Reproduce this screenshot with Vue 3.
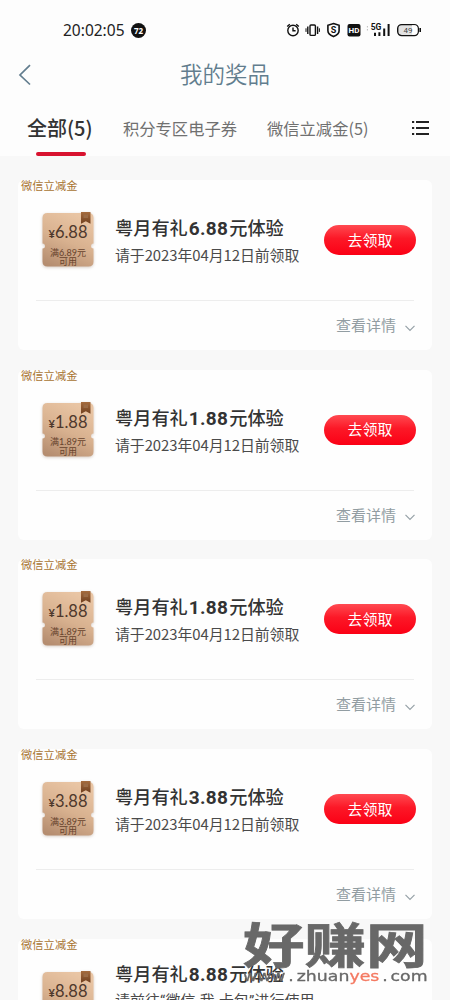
<script setup>
const prizes = [
  { amount: '6.88', min: '6.89', note: '请于2023年04月12日前领取', claimable: true },
  { amount: '1.88', min: '1.89', note: '请于2023年04月12日前领取', claimable: true },
  { amount: '1.88', min: '1.89', note: '请于2023年04月12日前领取', claimable: true },
  { amount: '3.88', min: '3.89', note: '请于2023年04月12日前领取', claimable: true },
  { amount: '8.88', min: '', note: '请前往“微信-我-卡包”进行使用', claimable: false },
]
</script>

<template>
  <div class="screen">
    <header class="top">
      <div class="status">
        <span class="clock">20:02:05</span>
        <span class="badge">72</span>
        <svg class="status-icons" width="140" height="20" viewBox="0 0 140 20" fill="none" stroke="#111" stroke-width="1.4">
          <circle cx="8" cy="10.5" r="5.2" />
          <path d="M8 7.5v3.3h2.6M2.2 6.5l2.6-2.3M13.8 6.5l-2.6-2.3" />
          <rect x="25" y="5" width="5.4" height="10.4" rx="1" />
          <path d="M22.8 6.5v7.4M32.6 6.5v7.4" />
          <path d="M21 8.3v3.6M34.4 8.3v3.6" stroke-width="1" />
          <path d="M48.5 3.5l5.6 1.8v5.4c0 3-2.6 4.7-5.6 5.9-3-1.2-5.6-2.9-5.6-5.9V5.3z" stroke-width="1.6" />
          <text class="glyph" x="48.5" y="13.4" font-size="9">S</text>
          <rect x="62.500" y="4" width="13" height="12.500" rx="2" fill="#111" stroke="none" />
          <text class="glyph light" x="69" y="13.2" font-size="8">HD</text>
          <text class="glyph" x="91" y="9.8" font-size="8.500">5G</text>
          <path d="M90 12.8v3.2M94.4 12.3v3.7M99.2 8.5V16M103.6 4v12" stroke-width="2" />
          <path d="M82.4 6v1.5M82.4 9v1.5" stroke="#bbb" stroke-width="1" />
          <rect x="112.7" y="4.6" width="20.6" height="11" rx="4" fill="#e2e2e2" />
          <path d="M127 5.3h2.5q3 0 3 3v3.4q0 3-3 3H127z" fill="#fff" stroke="none" />
          <path d="M135.2 8v4" stroke-width="1.6" />
          <text class="glyph level" x="123" y="13" font-size="8">49</text>
        </svg>
      </div>
      <div class="nav">
        <svg class="back" width="14" height="22" viewBox="0 0 14 22" fill="none" stroke="#627d8e" stroke-width="1.7"><path d="M12 1.2L2 11l10 9.5" /></svg>
        <h1>我的奖品</h1>
      </div>
      <nav class="tabs">
        <span class="tab active">全部(5)</span>
        <span class="tab second">积分专区电子券</span>
        <span class="tab third">微信立减金(5)</span>
        <svg class="list-icon" width="17" height="16" viewBox="0 0 17 16" fill="none" stroke="#222" stroke-width="2"><path d="M0 2h2.2M0 8h2.2M0 14h2.2M4 2h13M4 8h13M4 14h13" /></svg>
      </nav>
    </header>

    <main class="list">
      <article v-for="(p, i) in prizes" :key="i" class="card">
        <div class="tag">微信立减金</div>
        <div class="body">
          <div class="coupon">
            <svg class="ticket" width="58" height="60" viewBox="0 0 58 60">
              <defs>
                <linearGradient :id="'tan' + i" x1="0.6" y1="0" x2="0.2" y2="1">
                  <stop offset="0" stop-color="#e9c5a4" />
                  <stop offset="0.5" stop-color="#d8b18f" />
                  <stop offset="1" stop-color="#b58d70" />
                </linearGradient>
                <linearGradient :id="'mark' + i" x1="0" y1="0" x2="0" y2="1">
                  <stop offset="0" stop-color="#a56c3e" />
                  <stop offset="1" stop-color="#70401f" />
                </linearGradient>
              </defs>
              <path :fill="`url(#tan${i})`" d="M8.500 3h41q5 0 5 5v25.500a2.500 2.500 0 0 0 0 5V51.500q0 5-5 5h-41q-5 0-5-5V38.500a2.500 2.500 0 0 0 0-5V8q0-5 5-5z" />
              <path :fill="`url(#mark${i})`" d="M42 2h9.500v11.800l-4.700-2.500-4.800 2.500z" />
              <path d="M44.500 4.500h4.500v3.500h-4.500z" fill="#9b6c46" />
            </svg>
            <div class="amount"><small>¥</small>{{ p.amount }}</div>
            <div v-if="p.min" class="terms">满{{ p.min }}元<br>可用</div>
          </div>
          <div class="info" :class="{ raised: !p.claimable }">
            <h2>粤月有礼<b>{{ p.amount }}</b>元体验</h2>
            <p>{{ p.note }}</p>
          </div>
          <button v-if="p.claimable" class="claim">去领取</button>
        </div>
        <div v-if="p.claimable" class="detail">
          <span>查看详情</span>
          <svg width="10" height="7" viewBox="0 0 10 7" fill="none" stroke="#96a1a7" stroke-width="1.2"><path d="M.5 .8L5 5.500 9.500 .8" /></svg>
        </div>
      </article>
    </main>

    <div class="brand">
      <div class="brand-name">好赚网</div>
      <div class="brand-url">www<i>.</i>zhuan<em>yes</em><i>.</i>com</div>
    </div>
  </div>
</template>

<style>
html, body { margin: 0; overflow: hidden; }
</style>

<style scoped>
.screen {
  position: relative;
  width: 450px;
  height: 1000px;
  overflow: hidden;
  background: #f8f8f8;
  font-family: "Noto Sans CJK SC", sans-serif;
  color: #333;
  white-space: nowrap;
}
.top { height: 156px; background: #fdfdfd; }
.status { display: flex; align-items: center; height: 60px; padding-left: 63px; }
.clock { width: 62px; font: 15.500px/20px "Noto Sans", sans-serif; color: #222; }
.badge { width: 15px; height: 15px; margin-left: 6px; border-radius: 50%; background: #111; color: #fff; font: bold 8px/15px "Noto Sans", sans-serif; text-align: center; }
.status-icons { margin-left: 139px; }
.glyph { fill: #111; stroke: none; text-anchor: middle; font-family: Roboto, sans-serif; font-weight: bold; }
.glyph.light { fill: #fff; }
.glyph.level { font-weight: 400; fill: #444; }
.nav { position: relative; display: flex; align-items: center; justify-content: center; height: 30px; }
.back { position: absolute; left: 18px; top: 4px; }
h1 { margin: -5px 0 0; font-size: 22.500px; line-height: 30px; font-weight: 350; color: #627d8e; }
.tabs { display: flex; align-items: center; height: 66px; padding: 9px 0 0 27px; box-sizing: border-box; }
.tab { height: 56px; line-height: 56px; font-size: 16.300px; color: #707070; }
.tab.active { position: relative; width: 66px; font-size: 20px; font-weight: 500; color: #333; }
.tab.active::after { content: ""; position: absolute; left: 9px; bottom: 0; width: 50px; height: 4px; border-radius: 2px; background: #d8122f; }
.second { width: 114px; margin-left: 30px; }
.third { width: 102px; margin-left: 30px; }
.list-icon { margin-left: 43px; margin-top: 1px; }
.list { display: flex; flex-direction: column; gap: 19.700px; padding: 24px 18px 0; }
.card { flex: none; height: 170px; border-radius: 6px; background: #fefefe; }
.tag { height: 12px; padding-left: 3px; font-size: 11.300px; line-height: 10px; color: #a87432; }
.body { display: flex; height: 109px; margin: 0 18px; border-bottom: 1px solid #ededed; box-sizing: border-box; }
.coupon { position: relative; flex: none; width: 58px; height: 60px; margin: 18px 0 0 3px; text-align: center; color: #4e382c; }
.ticket { position: absolute; left: 0; top: 0; filter: drop-shadow(0 1px 1.500px rgba(120, 85, 60, .3)); }
.amount { position: relative; padding-top: 12px; font: 16.500px/20px Lato, sans-serif; }
.amount small { font-size: 11px; font-weight: 700; }
.terms { position: relative; margin-top: 3.500px; font: 9px/9.500px Lato, "Noto Sans CJK SC", sans-serif; color: #67432d; }
.info { flex: none; width: 191px; margin-left: 18px; padding-top: 22px; }
.info.raised { padding-top: 9px; }
h2 { margin: 0; font-size: 18.200px; line-height: 26px; font-weight: 500; color: #333; }
h2 b { margin: 0 1px; font-family: Roboto, sans-serif; font-size: 19px; letter-spacing: .3px; }
.info p { margin: 1px 0 0; font-size: 14.900px; line-height: 24px; color: #4a4a4a; letter-spacing: -.06px; }
.info.raised p { font-family: Roboto, "Noto Sans CJK SC", sans-serif; letter-spacing: .12px; }
.claim { flex: none; width: 92px; height: 30px; margin: 33px 0 0 18px; padding: 0 0 1px; border: 0; border-radius: 15px; background: linear-gradient(#ff4a51, #fc1827 45%, #fb0015); color: #fff; font: 15px/28px "Noto Sans CJK SC", sans-serif; }
.detail { display: flex; align-items: center; justify-content: flex-end; gap: 9px; height: 47px; padding-right: 17px; color: #929da2; font-size: 15px; }
.detail svg { margin-top: 7px; }
.brand { position: absolute; left: 243px; top: 912px; width: 190px; color: #686868; }
.brand-name { height: 56px; font-size: 61.500px; line-height: 61px; font-weight: 700; transform: scaleY(.77); transform-origin: 0 30px; -webkit-text-stroke: 1px #686868; }
.brand-url { width: 153px; font: 14.500px/16px "DejaVu Sans", sans-serif; transform: scaleX(1.195); transform-origin: 0 0; -webkit-text-stroke: .3px currentColor; }
.brand-url i { margin: 0 2.400px; font-style: normal; }
.brand-url em { font-style: normal; color: #f47961; -webkit-text-stroke-color: #f47961; }
</style>
